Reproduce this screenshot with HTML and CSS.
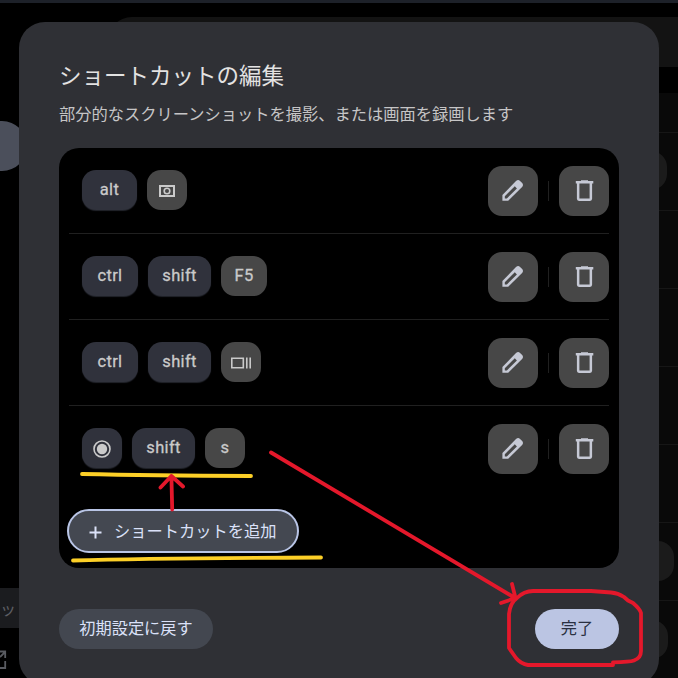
FILE: index.html
```
<!DOCTYPE html>
<html lang="ja">
<head>
<meta charset="utf-8">
<title>ショートカットの編集</title>
<link rel="stylesheet" href="styles.css">
</head>
<body>
<svg class="symbols" aria-hidden="true">
  <symbol id="pencil" viewBox="0 0 24 24"><path fill-rule="evenodd" d="M1.4 21.8V16L15 2.1Q17 .3 18.8 1.7L21.2 4.1Q22.8 5.9 21.1 8L7.2 21.8ZM3.8 19.4H5.9L15.9 9.4L13.8 7.3L3.8 17.3Z"/></symbol>
  <symbol id="trash" viewBox="0 0 24 24"><path fill-rule="evenodd" d="M9 1.2H16V2.1H21.3V4.6H20.1V19.8Q20.1 21.9 18 21.9H7Q4.9 21.9 4.9 19.8V4.6H3.8V2.1H9ZM7.4 4.6V19.4H17.6V4.6Z"/></symbol>
</svg>
<div class="backdrop">
  <div class="topbar"></div>
  <div class="search"></div>
  <div class="list">
    <div class="item first"></div>
    <div class="item"><span class="pill a"></span></div>
    <div class="item"></div><div class="item"></div><div class="item"></div><div class="item"></div>
    <div class="item"><span class="pill b"></span></div>
    <div class="item"><span class="pill c"></span></div>
  </div>
  <div class="nav-pill"></div>
  <div class="side-label">ッ</div>
  <svg class="external" width="7" height="20" viewBox="0 0 7 20"><path d="M0 1.5H5.2V8M5.2 11V18H0M5 2L0 7"/></svg>
</div>
<main class="dialog">
  <h1>ショートカットの編集</h1>
  <p class="description">部分的なスクリーンショットを撮影、または画面を録画します</p>
  <section class="panel">
    <div class="row">
      <div class="keys"><kbd class="key modifier alt">alt</kbd><kbd class="key"><svg width="18" height="14"><path class="thick" d="M2 2H16V12H2Z"/><circle class="thin" cx="9" cy="7" r="2.8"/></svg></kbd></div>
      <div class="actions"><button><svg><use href="#pencil"/></svg></button><i></i><button><svg><use href="#trash"/></svg></button></div>
    </div>
    <div class="row">
      <div class="keys"><kbd class="key modifier ctrl">ctrl</kbd><kbd class="key modifier shift">shift</kbd><kbd class="key f5">F5</kbd></div>
      <div class="actions"><button><svg><use href="#pencil"/></svg></button><i></i><button><svg><use href="#trash"/></svg></button></div>
    </div>
    <div class="row">
      <div class="keys"><kbd class="key modifier ctrl">ctrl</kbd><kbd class="key modifier shift">shift</kbd><kbd class="key"><svg width="20" height="12"><path class="thin" d="M.8 1.3H12.3V10.7H.8ZM15.8 .5V11.5M19.2 .5V11.5"/></svg></kbd></div>
      <div class="actions"><button><svg><use href="#pencil"/></svg></button><i></i><button><svg><use href="#trash"/></svg></button></div>
    </div>
    <div class="row last">
      <div class="keys"><kbd class="key modifier"><svg width="18" height="18"><circle class="thin" cx="9" cy="9" r="8"/><circle class="solid" cx="9" cy="9" r="5.2"/></svg></kbd><kbd class="key modifier shift">shift</kbd><kbd class="key">s</kbd></div>
      <div class="actions"><button><svg><use href="#pencil"/></svg></button><i></i><button><svg><use href="#trash"/></svg></button></div>
    </div>
    <button class="add"><svg width="13" height="13"><path d="M6.5 .5V12.5M.5 6.5H12.5"/></svg><span>ショートカットを追加</span></button>
  </section>
  <footer><button class="reset">初期設定に戻す</button><button class="done">完了</button></footer>
</main>
<svg class="annotations" width="678" height="678" viewBox="0 0 678 678" aria-hidden="true">
  <g class="yellow"><path d="M82 474Q150 475.5 251 476"/><path d="M73 560.5Q150 558.5 321 557.5"/></g>
  <g class="red"><path d="M172.2 509.5L171.4 476M160.5 487.5L171.4 476L183 486.5"/><path d="M271 452.5L515 598M512 584L515.5 598L501 603"/>
  <path d="M517 598C522 593 528 591 533 591H591L611 592.5Q618 593 624 597L628 600.5L633 603Q640 609 641 613V651Q641 658 634 660.5Q630 662 613 662.3V665H528Q521 664 516 658L509 648V614Q510 603 517 598Z"/></g>
</svg>
</body>
</html>
```
FILE: styles.css
```
* { box-sizing: border-box; }
body { margin: 0; width: 678px; height: 678px; position: relative; overflow: hidden; background: #000; font-family: "Noto Sans CJK JP", sans-serif; }
button { border: 0; padding: 0; font: inherit; }
.symbols { display: none; }
.backdrop { height: 678px; overflow: hidden; }
.topbar { height: 3px; background: #1d2129; }
.search { height: 50px; margin: 14px 0 26px 107px; border-radius: 25px 0 0 25px; background: #131313; }
.list { margin-left: 107px; background: #090909; }
.item { position: relative; height: 78px; border-bottom: 1px solid #161616; }
.item.first { height: 40px; }
.pill { position: absolute; top: 18px; right: 11px; width: 60px; height: 39px; border-radius: 16px; background: #1b1b1b; }
.pill.b { right: 4px; height: 40px; }
.pill.c { top: 19px; right: 10px; }
.nav-pill { position: absolute; left: -40px; top: 121px; width: 67px; height: 50px; border-radius: 25px; background: #4b4f5b; }
.side-label { position: absolute; left: 0; top: 588px; width: 30px; height: 40px; background: #1b1c1f; color: #5e5f64; font-size: 16px; line-height: 40px; }
.external { position: absolute; left: 0; top: 650px; fill: none; stroke: #595b61; stroke-width: 1.8; }
.dialog { position: absolute; left: 19px; top: 22px; width: 640px; height: 663px; padding: 36px 40px 0; border-radius: 26px; background: #2f3035; }
h1 { height: 33px; margin: 0; color: #e3e2e2; font-size: 22.5px; font-weight: 400; line-height: 33px; white-space: nowrap; }
.description { height: 24px; margin: 10px 0 23px; color: #c6c5c6; font-size: 16.25px; line-height: 24px; white-space: nowrap; }
.panel { height: 420px; padding: 0 10px; border-radius: 20px; background: #000; }
.row { display: flex; justify-content: space-between; height: 86px; padding: 18px 0 0 13px; border-bottom: 1px solid #202020; }
.row.last { border-color: transparent; }
.keys { display: flex; gap: 10px; padding-top: 4px; align-items: flex-start; }
.key { display: flex; align-items: center; justify-content: center; width: 40px; height: 40px; border-radius: 14px; background: #474747; color: #cacaca; font: 400 16.5px/24px Roboto, sans-serif; letter-spacing: .3px; -webkit-text-stroke: .3px #cacaca; }
.key svg { position: relative; top: 1px; overflow: visible; fill: none; stroke: #cacaca; }
.key.modifier { background: #30323c; box-shadow: 0 1px 1px #22242b; }
.key.alt { width: 55px; }
.key.ctrl { width: 56px; }
.key.shift { width: 63px; }
.key.f5 { width: 46px; }
.thin { stroke-width: 1.6; }
.thick { stroke-width: 2; }
.solid { fill: #cacaca; stroke: none; }
.actions { display: flex; gap: 10px; }
.actions button { display: flex; align-items: center; justify-content: center; width: 50px; height: 50px; border-radius: 14px; background: #474747; }
.actions svg { width: 24px; height: 24px; fill: #c6c9d5; }
.actions i { width: 1px; height: 20px; margin-top: 15px; background: #202020; }
.add { display: flex; align-items: center; gap: 12px; width: 232px; height: 44px; margin: 17px 0 0 -2px; padding-left: 20px; border: 2px solid #b9c5e6; border-radius: 22px; background: #444851; color: #dbe1f8; font-size: 16.25px; line-height: 24px; white-space: nowrap; }
.add span { padding-bottom: 2px; }
.add svg { flex: none; position: relative; top: 1px; fill: none; stroke: #dbe1f8; stroke-width: 2; }
footer { display: flex; justify-content: space-between; margin-top: 41px; }
footer button { height: 40px; padding-bottom: 4px; border-radius: 20px; font-size: 16.2px; }
.reset { width: 154px; background: #434750; color: #dbe1f8; }
.done { width: 84px; background: #bbc5e3; color: #293041; }
.annotations { position: absolute; inset: 0; fill: none; stroke-linecap: round; stroke-linejoin: round; }
.yellow { stroke: #fccf27; stroke-width: 3.8; }
.red { stroke: #e4182b; stroke-width: 3.8; }
```
